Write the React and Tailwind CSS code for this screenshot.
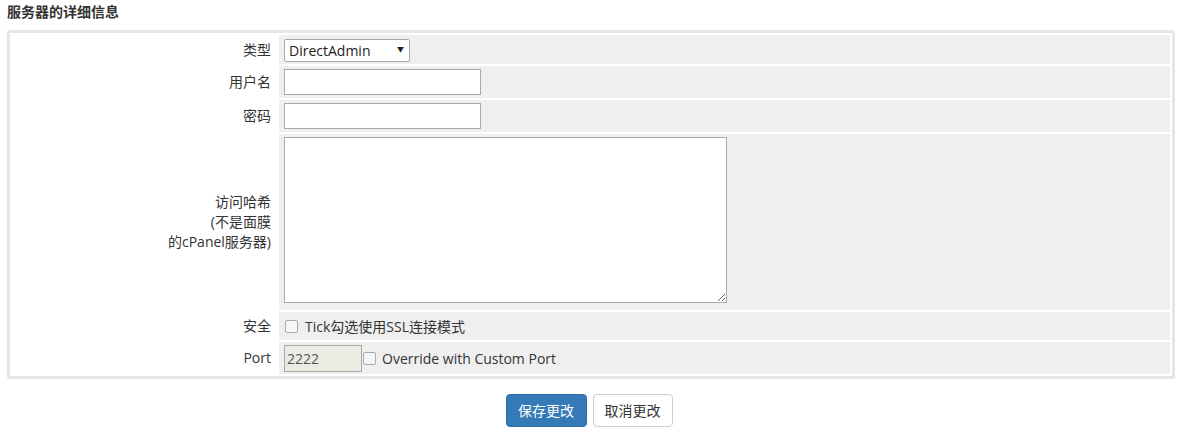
import React from "react";

const font = { fontFamily: '"Open Sans", "Noto Sans CJK SC", sans-serif' };

const Row = ({ label, height, children }) => (
  <tr className={height}>
    <td className="w-[265px] pr-[6px] text-right align-middle text-[14px] leading-[20px] text-[#333]">
      {label}
    </td>
    <td className="bg-[#efefef] pl-[5px] align-middle">{children}</td>
  </tr>
);

const Checkbox = () => (
  <span className="inline-block h-[13px] w-[13px] rounded-[2px] border border-[#a9a9a9] bg-[#f6f6f6] align-middle" />
);

export default function App() {
  return (
    <div className="bg-white pb-[14px] text-[#333]" style={font}>
      {/* Title */}
      <h2 className="px-[7px] pt-[2px] text-[14px] font-bold leading-[20px] text-[#333]">
        服务器的详细信息
      </h2>

      {/* Details box */}
      <div className="mx-[7px] mt-[8px] rounded-[3px] border-[3px] border-[#e3e7ea]">
        <table className="w-full border-separate border-spacing-[2px]">
          <tbody>
            <Row label="类型" height="h-[29px]">
              <div className="relative inline-block align-middle">
                <select
                  defaultValue="DirectAdmin"
                  className="block h-[23px] w-[126px] appearance-none rounded-[2px] border border-[#a9a9a9] bg-white pl-[4px] text-[14px] text-[#222] outline-none"
                  style={font}
                >
                  <option>DirectAdmin</option>
                  <option>cPanel</option>
                  <option>Plesk</option>
                </select>
                <span className="pointer-events-none absolute right-[6px] top-[6px] text-[7px] leading-[10px] text-[#222]">▼</span>
              </div>
            </Row>
            <Row label="用户名" height="h-[32px]">
              <input className="block h-[26px] w-[197px] border border-[#a9a9a9] bg-white outline-none" />
            </Row>
            <Row label="密码" height="h-[32px]">
              <input type="password" className="block h-[26px] w-[197px] border border-[#a9a9a9] bg-white outline-none" />
            </Row>
            <Row
              label={
                <>
                  访问哈希
                  <br />
                  (不是面膜
                  <br />
                  的cPanel服务器)
                </>
              }
              height="h-[176px]"
            >
              <textarea className="mb-[4px] block h-[166px] w-[443px] border border-[#a9a9a9] bg-white outline-none" />
            </Row>
            <Row label="安全" height="h-[28px]">
              <div className="flex items-center gap-[7px] pl-[1px] text-[14px] text-[#333]">
                <Checkbox />
                <span>Tick勾选使用SSL连接模式</span>
              </div>
            </Row>
            <Row label="Port" height="h-[32px]">
              <div className="flex items-center text-[14px] text-[#333]">
                <input
                  disabled
                  defaultValue="2222"
                  className="h-[27px] w-[78px] border border-[#a9a9a9] bg-[#ebebe4] pl-[2px] text-[14px] text-[#555]"
                  style={font}
                />
                <span className="ml-[1px] flex">
                  <Checkbox />
                </span>
                <span className="ml-[6px]">Override with Custom Port</span>
              </div>
            </Row>
          </tbody>
        </table>
      </div>

      {/* Buttons */}
      <div className="mt-[15px] flex justify-center gap-[6px] pr-[4px]">
        <button className="h-[33px] w-[81px] rounded-[4px] border border-[#2e6da4] bg-[#337ab7] text-[14px] text-white">
          保存更改
        </button>
        <button className="h-[33px] w-[80px] rounded-[4px] border border-[#ccc] bg-white text-[14px] text-[#333]">
          取消更改
        </button>
      </div>
    </div>
  );
}
